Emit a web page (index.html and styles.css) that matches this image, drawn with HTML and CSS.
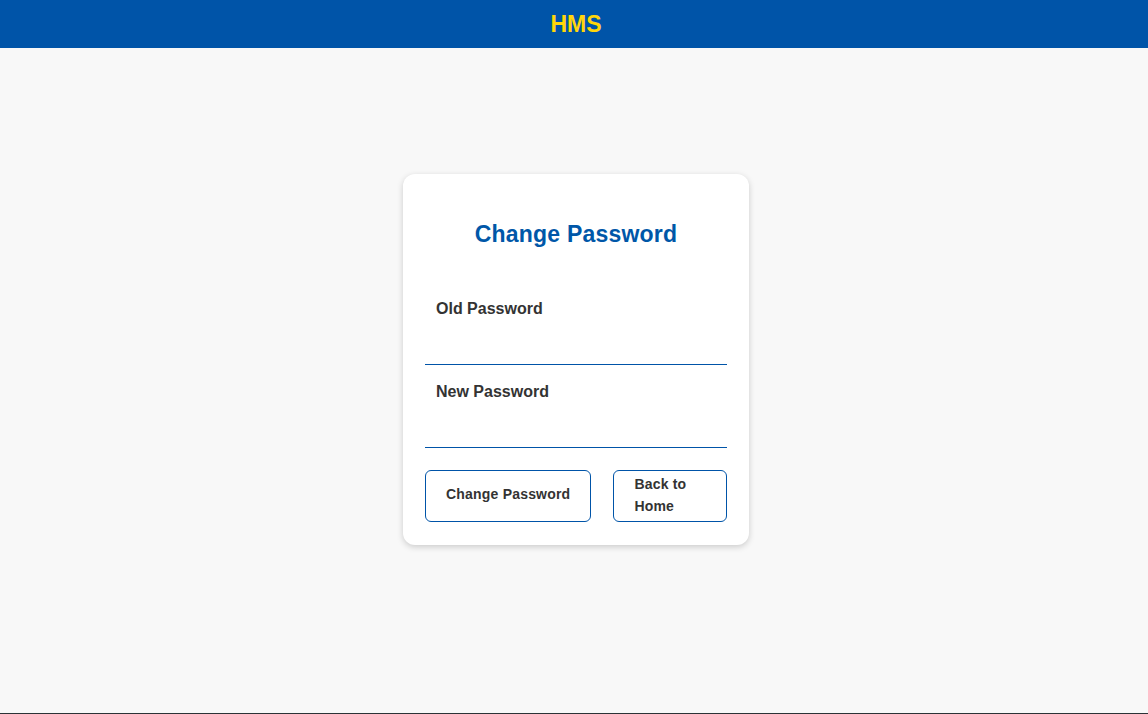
FILE: index.html
```html
<!DOCTYPE html>
<html lang="en">
<head>
<meta charset="utf-8">
<title>HMS - Change Password</title>
<link rel="stylesheet" href="styles.css">
</head>
<body>
<div class="page">
  <header class="topbar">
    <h1 class="brand">HMS</h1>
  </header>
  <main class="main">
    <div class="card">
      <h2 class="card-title">Change Password</h2>
      <form class="form">
        <div class="field">
          <label class="field-label" for="old">Old Password</label>
          <input class="field-input" id="old" type="password">
        </div>
        <div class="field field-second">
          <label class="field-label" for="new">New Password</label>
          <input class="field-input" id="new" type="password">
        </div>
        <div class="actions">
          <button type="button" class="btn">Change Password</button>
          <button type="button" class="btn btn-grow">Back to Home</button>
        </div>
      </form>
    </div>
  </main>
  <footer class="footer"></footer>
</div>
</body>
</html>
```

FILE: styles.css
```css
* { box-sizing: border-box; }
html, body { margin: 0; padding: 0; }
body {
  font-family: "Liberation Sans", Arial, sans-serif;
  background: #f8f8f8;
  color: #333;
  overflow: hidden;
}
.page {
  width: 1152px;
  min-height: 100vh;
  display: flex;
  flex-direction: column;
}
.topbar {
  height: 48px;
  background: #0054a8;
  display: flex;
  align-items: center;
  justify-content: center;
}
.brand {
  margin: 0;
  color: #ffd60a;
  font-size: 23px;
  font-weight: 700;
  line-height: 26px;
}
.main {
  flex: 1;
  padding-top: 126px;
}
.card {
  width: 346px;
  margin: 0 auto;
  background: #fff;
  border-radius: 12px;
  box-shadow: 0 2px 6px rgba(0, 0, 0, 0.18);
  padding: 41px 22px 23px;
}
.card-title {
  margin: 0;
  text-align: center;
  color: #0057a8;
  font-size: 23px;
  letter-spacing: 0.2px;
  font-weight: 700;
  line-height: 38px;
}
.form { margin-top: 43px; }
.field { display: flex; flex-direction: column; }
.field-second { margin-top: 14px; }
.field-label {
  padding: 1px 11px 0;
  font-size: 16px;
  font-weight: 700;
  line-height: 24px;
  color: #333;
}
.field-input {
  height: 44px;
  border: 0;
  border-bottom: 1px solid #0054a8;
  background: transparent;
  outline: none;
  padding: 0 11px;
  font: inherit;
}
.actions {
  margin-top: 22px;
  display: flex;
  gap: 22px;
}
.btn {
  height: 52px;
  padding: 2px 20px 6px;
  background: #fff;
  border: 1px solid #0054a8;
  border-radius: 6px;
  font-family: "Liberation Sans", Arial, sans-serif;
  font-size: 14px;
  font-weight: 700;
  letter-spacing: 0.2px;
  line-height: 22px;
  color: #333;
  text-align: left;
  cursor: pointer;
}
.btn-grow { flex: 1; }
.footer {
  height: 1px;
  background: #2b3236;
}
```
